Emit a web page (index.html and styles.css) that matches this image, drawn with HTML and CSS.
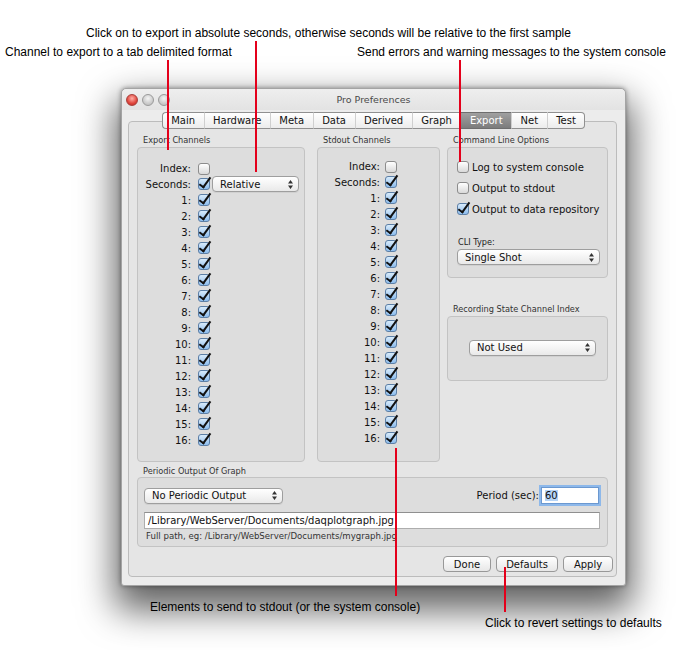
FILE: index.html
```html
<!DOCTYPE html>
<html lang="en">
<head>
    <meta charset="UTF-8">
    <title>Pro Preferences</title>
    <link rel="stylesheet" href="styles.css">
</head>
<body>
    <div class="desktop">
        <div class="window">
            <div class="titlebar">
                <div class="lights">
                    <span class="light red"></span>
                    <span class="light"></span>
                    <span class="light"></span>
                </div>
                <span class="title">Pro Preferences</span>
                <span></span>
            </div>

            <div class="tabs">
                <span class="tab">Main</span>
                <span class="tab">Hardware</span>
                <span class="tab">Meta</span>
                <span class="tab">Data</span>
                <span class="tab">Derived</span>
                <span class="tab">Graph</span>
                <span class="tab active">Export</span>
                <span class="tab">Net</span>
                <span class="tab">Test</span>
            </div>

            <div class="tabbox">
                <div class="top-row">
                    <div class="group col-export">
                        <div class="group-title">Export Channels</div>
                        <div class="group-box channels export-list">
                            <div class="ch-row index-row"><span class="ch-label">Index:</span><span class="cb"></span></div>
                            <div class="ch-row"><span class="ch-label">Seconds:</span><span class="cb on"></span>
                                <span class="popup relative">Relative<svg class="arrows" width="5" height="9" viewBox="0 0 5 9"><path d="M0 3.5L2.5 0L5 3.5Z M0 5.5L2.5 9L5 5.5Z"/></svg></span>
                            </div>
                            <div class="ch-row"><span class="ch-label">1:</span><span class="cb on"></span></div>
                            <div class="ch-row"><span class="ch-label">2:</span><span class="cb on"></span></div>
                            <div class="ch-row"><span class="ch-label">3:</span><span class="cb on"></span></div>
                            <div class="ch-row"><span class="ch-label">4:</span><span class="cb on"></span></div>
                            <div class="ch-row"><span class="ch-label">5:</span><span class="cb on"></span></div>
                            <div class="ch-row"><span class="ch-label">6:</span><span class="cb on"></span></div>
                            <div class="ch-row"><span class="ch-label">7:</span><span class="cb on"></span></div>
                            <div class="ch-row"><span class="ch-label">8:</span><span class="cb on"></span></div>
                            <div class="ch-row"><span class="ch-label">9:</span><span class="cb on"></span></div>
                            <div class="ch-row"><span class="ch-label">10:</span><span class="cb on"></span></div>
                            <div class="ch-row"><span class="ch-label">11:</span><span class="cb on"></span></div>
                            <div class="ch-row"><span class="ch-label">12:</span><span class="cb on"></span></div>
                            <div class="ch-row"><span class="ch-label">13:</span><span class="cb on"></span></div>
                            <div class="ch-row"><span class="ch-label">14:</span><span class="cb on"></span></div>
                            <div class="ch-row"><span class="ch-label">15:</span><span class="cb on"></span></div>
                            <div class="ch-row"><span class="ch-label">16:</span><span class="cb on"></span></div>
                        </div>
                    </div>

                    <div class="group col-stdout">
                        <div class="group-title">Stdout Channels</div>
                        <div class="group-box channels stdout-list">
                            <div class="ch-row index-row"><span class="ch-label">Index:</span><span class="cb"></span></div>
                            <div class="ch-row"><span class="ch-label">Seconds:</span><span class="cb on"></span></div>
                            <div class="ch-row"><span class="ch-label">1:</span><span class="cb on"></span></div>
                            <div class="ch-row"><span class="ch-label">2:</span><span class="cb on"></span></div>
                            <div class="ch-row"><span class="ch-label">3:</span><span class="cb on"></span></div>
                            <div class="ch-row"><span class="ch-label">4:</span><span class="cb on"></span></div>
                            <div class="ch-row"><span class="ch-label">5:</span><span class="cb on"></span></div>
                            <div class="ch-row"><span class="ch-label">6:</span><span class="cb on"></span></div>
                            <div class="ch-row"><span class="ch-label">7:</span><span class="cb on"></span></div>
                            <div class="ch-row"><span class="ch-label">8:</span><span class="cb on"></span></div>
                            <div class="ch-row"><span class="ch-label">9:</span><span class="cb on"></span></div>
                            <div class="ch-row"><span class="ch-label">10:</span><span class="cb on"></span></div>
                            <div class="ch-row"><span class="ch-label">11:</span><span class="cb on"></span></div>
                            <div class="ch-row"><span class="ch-label">12:</span><span class="cb on"></span></div>
                            <div class="ch-row"><span class="ch-label">13:</span><span class="cb on"></span></div>
                            <div class="ch-row"><span class="ch-label">14:</span><span class="cb on"></span></div>
                            <div class="ch-row"><span class="ch-label">15:</span><span class="cb on"></span></div>
                            <div class="ch-row"><span class="ch-label">16:</span><span class="cb on"></span></div>
                        </div>
                    </div>

                    <div class="col-right">
                        <div class="group">
                            <div class="group-title">Command Line Options</div>
                            <div class="group-box cli-box">
                                <div class="opt"><span class="cb"></span>Log to system console</div>
                                <div class="opt"><span class="cb"></span>Output to stdout</div>
                                <div class="opt"><span class="cb on"></span>Output to data repository</div>
                                <div class="small-label">CLI Type:</div>
                                <span class="popup">Single Shot<svg class="arrows" width="5" height="9" viewBox="0 0 5 9"><path d="M0 3.5L2.5 0L5 3.5Z M0 5.5L2.5 9L5 5.5Z"/></svg></span>
                            </div>
                        </div>
                        <div class="group recording">
                            <div class="group-title">Recording State Channel Index</div>
                            <div class="group-box rec-box">
                                <span class="popup not-used">Not Used<svg class="arrows" width="5" height="9" viewBox="0 0 5 9"><path d="M0 3.5L2.5 0L5 3.5Z M0 5.5L2.5 9L5 5.5Z"/></svg></span>
                            </div>
                        </div>
                    </div>
                </div>

                <div class="group periodic">
                    <div class="group-title">Periodic Output Of Graph</div>
                    <div class="group-box periodic-box">
                        <div class="periodic-row">
                            <span class="popup no-output">No Periodic Output<svg class="arrows" width="5" height="9" viewBox="0 0 5 9"><path d="M0 3.5L2.5 0L5 3.5Z M0 5.5L2.5 9L5 5.5Z"/></svg></span>
                            <span class="period-label">Period (sec):</span>
                            <span class="field period focus"><span class="sel">60</span></span>
                        </div>
                        <div class="field path">/Library/WebServer/Documents/daqplotgraph.jpg</div>
                        <div class="hint">Full path, eg: /Library/WebServer/Documents/mygraph.jpg</div>
                    </div>
                </div>

                <div class="buttons">
                    <span class="btn done">Done</span>
                    <span class="btn defaults">Defaults</span>
                    <span class="btn apply">Apply</span>
                </div>
            </div>
        </div>
    </div>

    <!-- callouts -->
    <div class="note n1">Click on to export in absolute seconds, otherwise seconds will be relative to the first sample</div>
    <div class="note n2">Channel to export to a tab delimited format</div>
    <div class="note n3">Send errors and warning messages to the system console</div>
    <div class="note n4">Elements to send to stdout (or the system console)</div>
    <div class="note n5">Click to revert settings to defaults</div>

    <div class="line l1"></div>
    <div class="line l2"></div>
    <div class="line l3"></div>
    <div class="line l4"></div>
    <div class="line l5"></div>
</body>
</html>
```

FILE: styles.css
```css
body {
    margin: 0;
    background: #fff;
    position: relative;
    width: 700px;
    height: 650px;
    overflow: hidden;
    font-family: "DejaVu Sans", sans-serif;
}

.desktop {
    padding: 88px 0 0 121px;
}

.window {
    width: 505px;
    height: 498px;
    box-sizing: border-box;
    background: #ececec;
    border: 1px solid #a4a4a4;
    border-radius: 5px 5px 3px 3px;
    box-shadow: 0 18px 36px 6px rgba(0,0,0,0.62), 0 0 5px rgba(0,0,0,0.4);
}

.titlebar {
    height: 21px;
    display: grid;
    grid-template-columns: 1fr auto 1fr;
    align-items: center;
    background: linear-gradient(#eeeeee, #e3e3e3);
    border-radius: 5px 5px 0 0;
}

.lights {
    display: flex;
    gap: 4px;
    padding-left: 4px;
}

.light {
    width: 12px;
    height: 12px;
    box-sizing: border-box;
    border-radius: 50%;
    border: 1px solid #9a9a9a;
    background: radial-gradient(circle at 50% 35%, #f4f4f4, #c6c6c6 70%);
}

.light.red {
    border-color: #a8403c;
    background: radial-gradient(circle at 50% 35%, #ffb0a8, #e0453c 60%, #b22a22);
}

.title {
    font-size: 9.5px;
    color: #4a4a4a;
}

/* tab strip */
.tabs {
    display: flex;
    justify-content: center;
    margin-top: 2px;
    position: relative;
    z-index: 1;
}

.tab {
    height: 17px;
    box-sizing: border-box;
    display: flex;
    align-items: center;
    padding: 0 8.5px;
    font-size: 10px;
    color: #111;
    background: linear-gradient(#ffffff, #ececec);
    border-top: 1px solid #909090;
    border-bottom: 1px solid #909090;
    border-left: 1px solid #cfcfcf;
}

.tab:first-child {
    border-left: 1px solid #909090;
    border-radius: 4px 0 0 4px;
}

.tab:last-child {
    border-right: 1px solid #909090;
    border-radius: 0 4px 4px 0;
}

.tab.active {
    color: #fff;
    background: linear-gradient(#a0a0a0, #7c7c7c);
    border-color: #6e6e6e;
}

.tabbox {
    margin: -8px 8px 0 6px;
    height: 456px;
    box-sizing: border-box;
    padding: 13px 8px 4px 8px;
    background: #e5e5e5;
    border: 1px solid #bcbcbc;
    border-radius: 4px;
}

.top-row {
    display: flex;
    gap: 12px;
}

.group-title {
    height: 12px;
    font-size: 8.2px;
    color: #333;
    padding-left: 6px;
    line-height: 10px;
}

.group-box {
    box-sizing: border-box;
    background: #dddddd;
    border: 1px solid #c3c3c3;
    border-radius: 4px;
}

.col-export { width: 168px; }
.col-stdout { width: 123px; }

.col-right {
    width: 161px;
    margin-left: -5px;
}

.channels {
    height: 315px;
    font-size: 10px;
}

.export-list { padding: 13px 0 0 3px; }
.stdout-list { padding: 11px 0 0 0; }

.ch-row {
    height: 16px;
    display: flex;
    align-items: center;
}

.ch-row.index-row { height: 15px; }

.ch-label {
    text-align: right;
    color: #111;
}

.export-list .ch-label { width: 50px; margin-right: 7px; }
.stdout-list .ch-label { width: 62px; margin-right: 5px; }

/* checkbox */
.cb {
    width: 12px;
    height: 12px;
    flex: none;
    box-sizing: border-box;
    border: 1px solid #8c8c8c;
    border-radius: 3px;
    background: linear-gradient(#ffffff, #d9d9d9);
    position: relative;
}

.cb.on {
    border-color: #5c7fa6;
    background: linear-gradient(#d8ebfb, #8dbdee);
}

.cb.on::after {
    content: '';
    position: absolute;
    left: 3px;
    top: -4px;
    width: 4px;
    height: 11px;
    border-right: 2px solid #111;
    border-bottom: 2px solid #111;
    transform: rotate(36deg);
}

/* popup button */
.popup {
    height: 16px;
    box-sizing: border-box;
    display: flex;
    align-items: center;
    justify-content: space-between;
    padding: 0 5px 0 7px;
    font-size: 10px;
    color: #111;
    border: 1px solid #9e9e9e;
    border-radius: 4px;
    background: linear-gradient(#ffffff, #e9e9e9);
    box-shadow: 0 1px 0 rgba(0,0,0,0.06);
}

.arrows { fill: #333; }

.popup.relative {
    width: 87px;
    margin-left: 2px;
}

.cli-box {
    height: 131px;
    padding: 11px 7px 0 9px;
    font-size: 10px;
}

.opt {
    height: 16px;
    display: flex;
    align-items: center;
    gap: 3px;
    color: #111;
    margin-bottom: 5px;
}

.small-label {
    font-size: 8.2px;
    color: #222;
    margin-top: 20px;
    height: 12px;
    padding-left: 1px;
}

.recording { margin-top: 26px; }

.recording .group-title { padding-left: 6px; }

.rec-box {
    height: 65px;
    display: flex;
    align-items: center;
    padding: 0 11px 2px 21px;
}

.popup.not-used { flex: 1; }

.periodic { margin-top: 4px; }

.periodic .group-title { height: 11px; }

.periodic-box {
    height: 70px;
    padding: 9px 7px 0 6px;
}

.periodic-row {
    display: flex;
    align-items: center;
    height: 17px;
}

.popup.no-output { width: 139px; }

.period-label {
    margin-left: auto;
    font-size: 10px;
    color: #111;
    margin-right: 2px;
}

.field {
    height: 17px;
    box-sizing: border-box;
    display: flex;
    align-items: center;
    padding: 0 3px;
    font-size: 10px;
    color: #111;
    background: #fff;
    border: 1px solid #adadad;
    border-top-color: #8f8f8f;
}

.field.period {
    width: 58px;
    margin-right: 1px;
}

.field.focus {
    border-color: #6b98d0;
    box-shadow: 0 0 0 2px #8db8ea;
}

.sel { background: #b6d4f6; }

.field.path {
    margin-top: 8px;
    width: 456px;
}

.hint {
    font-size: 8.6px;
    color: #333;
    padding: 2px 0 0 2px;
}

.buttons {
    display: flex;
    justify-content: flex-end;
    gap: 5px;
    margin: 9px -5px 0 0;
}

.btn {
    height: 16px;
    box-sizing: border-box;
    display: flex;
    align-items: center;
    justify-content: center;
    font-size: 10px;
    color: #111;
    border: 1px solid #989898;
    border-radius: 4px;
    background: linear-gradient(#ffffff, #e7e7e7);
}

.btn.done { width: 48px; }
.btn.defaults { width: 62px; }
.btn.apply { width: 50px; }

/* callouts drawn over the screenshot */
.note {
    position: absolute;
    font-family: "Liberation Sans", Arial, sans-serif;
    font-size: 12px;
    line-height: 14px;
    color: #000;
    white-space: nowrap;
}

.n1 { left: 86px; top: 26px; }
.n2 { left: 5px; top: 45px; }
.n3 { left: 357px; top: 45px; }
.n4 { left: 150px; top: 600px; }
.n5 { left: 485px; top: 616px; }

.line {
    position: absolute;
    width: 2px;
    background: #e4001b;
    z-index: 2;
}

.l1 { left: 167px; top: 60px; height: 90px; }
.l2 { left: 255px; top: 41px; height: 131px; }
.l3 { left: 459px; top: 60px; height: 102px; }
.l4 { left: 395px; top: 448px; height: 148px; }
.l5 { left: 504px; top: 567px; height: 45px; }
```
